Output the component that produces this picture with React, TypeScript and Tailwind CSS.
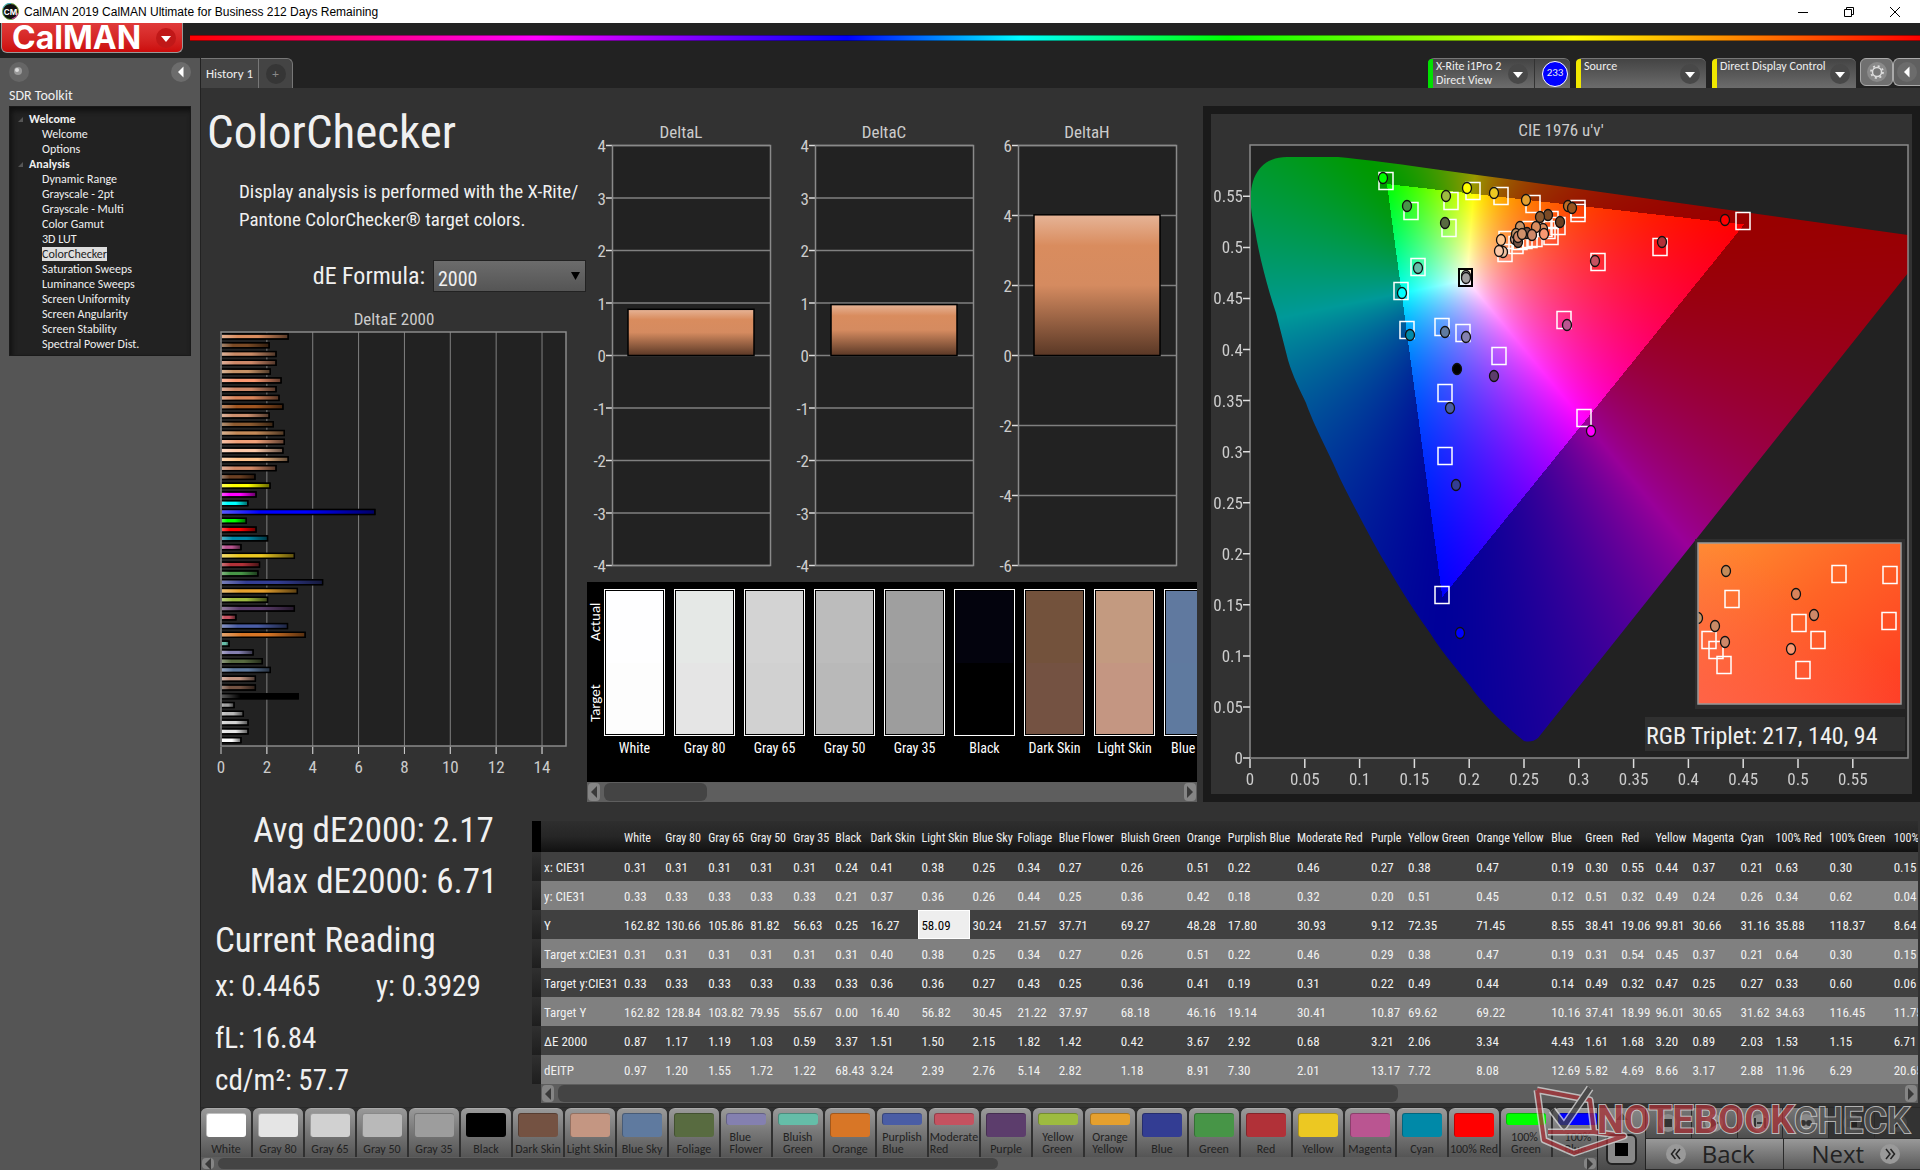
import { useEffect, useRef } from 'react';
import type { ReactNode } from 'react';

const tree = [
  { group: 'Welcome', items: ['Welcome', 'Options'] },
  {
    group: 'Analysis',
    items: ['Dynamic Range', 'Grayscale - 2pt', 'Grayscale - Multi', 'Color Gamut', '3D LUT', 'ColorChecker', 'Saturation Sweeps', 'Luminance Sweeps', 'Screen Uniformity', 'Screen Angularity', 'Screen Stability', 'Spectral Power Dist.']
  }
];

// top to bottom: [dE2000, colour]
const deltaE: [number, string][] = [
  [2.93, '#d98c5e'], [2.1, '#7a4a25'], [2.4, '#c98a66'], [2.4, '#cd8868'], [2.15, '#c69266'], [2.62, '#fa9872'],
  [2.4, '#cd8868'], [2.53, '#d9845a'], [2.7, '#a05520'], [2.1, '#cd906e'], [2.28, '#8c5a30'], [2.76, '#c48a58'],
  [2.76, '#f0a078'], [2.7, '#fcc8a8'], [2.93, '#ffc48e'], [2.4, '#d08866'], [1.48, '#6b3f22'], [2.14, '#ffff00'],
  [1.53, '#ff00ff'], [1.17, '#00ffff'], [6.71, '#0000ff'], [1.1, '#00ff00'], [1.53, '#ff0000'], [2.03, '#0089a8'],
  [0.87, '#ba5591'], [3.2, '#ecc822'], [1.68, '#b13138'], [1.61, '#479547'], [4.43, '#333d93'], [3.33, '#e5a02e'],
  [2.03, '#9dbb40'], [3.2, '#5c3d6c'], [0.65, '#c55260'], [2.9, '#4a5da5'], [3.67, '#d87626'], [0.35, '#65bda8'],
  [1.4, '#8480b0'], [1.8, '#586b40'], [2.15, '#5f7a9f'], [1.5, '#c49682'], [1.5, '#745242'], [3.37, '#000000'],
  [0.57, '#9f9f9f'], [0.97, '#b9b9b9'], [1.18, '#d1d1d1'], [1.18, '#e5e5e5'], [0.87, '#ffffff']
];

const deltas = [
  { title: 'DeltaL', max: 4, step: 1, value: 0.88 },
  { title: 'DeltaC', max: 4, step: 1, value: 0.97 },
  { title: 'DeltaH', max: 6, step: 2, value: 4.02 }
];

const comparator = [
  { name: 'White', actual: '#fefeff', target: '#fdfdfd' },
  { name: 'Gray 80', actual: '#e5e8e6', target: '#e5e5e5' },
  { name: 'Gray 65', actual: '#d3d3d3', target: '#d1d1d1' },
  { name: 'Gray 50', actual: '#bcbcbc', target: '#b9b9b9' },
  { name: 'Gray 35', actual: '#9f9f9f', target: '#9d9d9d' },
  { name: 'Black', actual: '#03030d', target: '#000000' },
  { name: 'Dark Skin', actual: '#73523c', target: '#745242' },
  { name: 'Light Skin', actual: '#c39a80', target: '#c49682' },
  { name: 'Blue Sky', actual: '#60799f', target: '#5f7a9f' }
];

// name, column width, then one value per table row
const columns: [string, number, ...string[]][] = [
  ['White', 41, '0.31', '0.33', '162.82', '0.31', '0.33', '162.82', '0.87', '0.97'],
  ['Gray 80', 43, '0.31', '0.33', '130.66', '0.31', '0.33', '128.84', '1.17', '1.20'],
  ['Gray 65', 42, '0.31', '0.33', '105.86', '0.31', '0.33', '103.82', '1.19', '1.55'],
  ['Gray 50', 43, '0.31', '0.33', '81.82', '0.31', '0.33', '79.95', '1.03', '1.72'],
  ['Gray 35', 42, '0.31', '0.33', '56.63', '0.31', '0.33', '55.67', '0.59', '1.22'],
  ['Black', 35, '0.24', '0.21', '0.25', '0.31', '0.33', '0.00', '3.37', '68.43'],
  ['Dark Skin', 51, '0.41', '0.37', '16.27', '0.40', '0.36', '16.40', '1.51', '3.24'],
  ['Light Skin', 51, '0.38', '0.36', '58.09', '0.38', '0.36', '56.82', '1.50', '2.39'],
  ['Blue Sky', 45, '0.25', '0.26', '30.24', '0.25', '0.27', '30.45', '2.15', '2.76'],
  ['Foliage', 41, '0.34', '0.44', '21.57', '0.34', '0.43', '21.22', '1.82', '5.14'],
  ['Blue Flower', 62, '0.27', '0.25', '37.71', '0.27', '0.25', '37.97', '1.42', '2.82'],
  ['Bluish Green', 66, '0.26', '0.36', '69.27', '0.26', '0.36', '68.18', '0.42', '1.18'],
  ['Orange', 41, '0.51', '0.42', '48.28', '0.51', '0.41', '46.16', '3.67', '8.91'],
  ['Purplish Blue', 69, '0.22', '0.18', '17.80', '0.22', '0.19', '19.14', '2.92', '7.30'],
  ['Moderate Red', 74, '0.46', '0.32', '30.93', '0.46', '0.31', '30.41', '0.68', '2.01'],
  ['Purple', 37, '0.27', '0.20', '9.12', '0.29', '0.22', '10.87', '3.21', '13.17'],
  ['Yellow Green', 68, '0.38', '0.51', '72.35', '0.38', '0.49', '69.62', '2.06', '7.72'],
  ['Orange Yellow', 75, '0.47', '0.45', '71.45', '0.47', '0.44', '69.22', '3.34', '8.08'],
  ['Blue', 34, '0.19', '0.12', '8.55', '0.19', '0.14', '10.16', '4.43', '12.69'],
  ['Green', 36, '0.30', '0.51', '38.41', '0.31', '0.49', '37.41', '1.61', '5.82'],
  ['Red', 34, '0.55', '0.32', '19.06', '0.54', '0.32', '18.99', '1.68', '4.69'],
  ['Yellow', 37, '0.44', '0.49', '99.81', '0.45', '0.47', '96.01', '3.20', '8.66'],
  ['Magenta', 48, '0.37', '0.24', '30.66', '0.37', '0.25', '30.65', '0.89', '3.17'],
  ['Cyan', 35, '0.21', '0.26', '31.16', '0.21', '0.27', '31.62', '2.03', '2.88'],
  ['100% Red', 54, '0.63', '0.34', '35.88', '0.64', '0.33', '34.63', '1.53', '11.96'],
  ['100% Green', 64, '0.30', '0.62', '118.37', '0.30', '0.60', '116.45', '1.15', '6.29'],
  ['100% Blue', 60, '0.15', '0.04', '8.64', '0.15', '0.06', '11.75', '6.71', '20.65']
];
const rowNames = ['x: CIE31', 'y: CIE31', 'Y', 'Target x:CIE31', 'Target y:CIE31', 'Target Y', 'ΔE 2000', 'dEITP'];

const patches: [string, string][] = [
  ['White', '#ffffff'], ['Gray 80', '#e5e5e5'], ['Gray 65', '#d1d1d1'], ['Gray 50', '#b9b9b9'], ['Gray 35', '#9d9d9d'],
  ['Black', '#000000'], ['Dark Skin', '#745242'], ['Light Skin', '#c49682'], ['Blue Sky', '#5f7a9f'], ['Foliage', '#586b40'],
  ['Blue\nFlower', '#8480b0'], ['Bluish\nGreen', '#65bda8'], ['Orange', '#d87626'], ['Purplish\nBlue', '#4a5da5'], ['Moderate\nRed', '#c55260'],
  ['Purple', '#5c3d6c'], ['Yellow\nGreen', '#9dbb40'], ['Orange\nYellow', '#e5a02e'], ['Blue', '#333d93'], ['Green', '#479547'],
  ['Red', '#b13138'], ['Yellow', '#ecc822'], ['Magenta', '#ba5591'], ['Cyan', '#0089a8'], ['100% Red', '#ff0000'],
  ['100%\nGreen', '#00ff00'], ['100%\nBlue', '#0000ff']
];

const targets = [
  [1386, 181], [1473, 191], [1501, 196], [1451, 201], [1533, 204], [1411, 211], [1449, 228], [1578, 209], [1578, 213],
  [1743, 221], [1660, 247], [1598, 262], [1418, 267], [1401, 291], [1407, 330], [1442, 327], [1463, 333], [1564, 320],
  [1499, 356], [1445, 393], [1445, 456], [1584, 418], [1442, 595],
  [1505, 253], [1506, 240], [1516, 245], [1525, 240], [1520, 241], [1535, 238], [1530, 230], [1551, 236], [1558, 226],
  [1551, 220], [1548, 230], [1530, 239], [1545, 228]
];

const measured: [number, number, string][] = [
  [1383, 178, '#00ff00'], [1467, 188, '#ffff00'], [1494, 193, '#ecc822'], [1446, 196, '#9dbb40'], [1526, 200, '#e5a02e'],
  [1407, 206, '#479547'], [1568, 206, '#c06c24'], [1572, 208, '#9a5520'], [1445, 223, '#586b40'], [1725, 220, '#ff0000'],
  [1662, 242, '#b13138'], [1595, 261, '#c55260'], [1418, 268, '#65bda8'], [1402, 293, '#00ffff'], [1410, 335, '#0089a8'],
  [1445, 332, '#5f7a9f'], [1466, 337, '#8480b0'], [1567, 325, '#ba5591'], [1457, 369, '#000000'], [1494, 376, '#5c3d6c'],
  [1450, 408, '#4a5da5'], [1456, 485, '#333d93'], [1591, 431, '#ff00ff'], [1460, 633, '#0000ff'],
  [1548, 215, '#7a4a25'], [1540, 217, '#8c5a30'], [1560, 222, '#6b3f22'], [1543, 229, '#d98c5e'], [1544, 234, '#fa9872'],
  [1536, 227, '#d98c5e'], [1520, 227, '#c69266'], [1527, 233, '#745242'], [1532, 235, '#cd8868'], [1515, 239, '#c49682'],
  [1518, 242, '#745242'], [1516, 234, '#c69266'], [1518, 237, '#cd8868'], [1522, 234, '#d0906a'], [1501, 240, '#ffc48e'],
  [1503, 252, '#f0c0a0'], [1499, 251, '#fcc8a8']
];

const insetTargets = [[1839, 574], [1890, 575], [1732, 599], [1799, 623], [1889, 621], [1709, 640], [1716, 650], [1724, 665], [1818, 640], [1803, 670]];
const insetMeasured: [number, number, string][] = [
  [1726, 571, '#c48a58'], [1796, 594, '#d9845a'], [1814, 615, '#cd8868'], [1715, 626, '#c98a66'], [1725, 642, '#cd8868'], [1791, 649, '#fa9872'], [1698, 618, '#c69266']
];

const locus =
  'M1287 157 H1338 C1380 161 1440 170 1500 178 L1908 235 V273 L1538 738 Q1532 743 1524 741 C1500 722 1480 700 1471 687 C1456 668 1441 651 1430 633 C1418 616 1407 600 1397 583 C1386 565 1375 546 1365 527 C1353 504 1342 484 1333 463 C1323 442 1313 423 1306 403 C1300 390 1293 377 1288 360 L1276 313 C1267 286 1259 255 1255 230 C1251 213 1250 202 1251 192 C1253 172 1264 157 1287 157 Z';

function Scrollbar({ thumb, size = 'h-5' }: { thumb: string; size?: string }) {
  return (
    <div className={`flex items-stretch gap-1 bg-[#5e5e5e] p-px ${size}`}>
      <button aria-label="Scroll left" className="flex w-3 shrink-0 items-center justify-center rounded bg-[#858585]">
        <svg width="6" height="12" viewBox="0 0 6 12"><path d="M6 0v12L0 6z" fill="#3a3a3a" /></svg>
      </button>
      <div className="min-w-0 flex-1"><div className={`h-full rounded-md bg-[#444] ${thumb}`} /></div>
      <button aria-label="Scroll right" className="flex w-3 shrink-0 items-center justify-center rounded bg-[#858585]">
        <svg width="6" height="12" viewBox="0 0 6 12"><path d="M0 0v12l6-6z" fill="#3a3a3a" /></svg>
      </button>
    </div>
  );
}

function RoundArrow({ left }: { left?: boolean }) {
  return (
    <svg width="20" height="20" viewBox="0 0 20 20" className="shrink-0">
      <circle cx="10" cy="10" r="10" fill={left ? '#6c6c6c' : '#484848'} />
      <path d={left ? 'M12.500 4.500v11L7 10z' : 'M5 8h10l-5 6z'} fill="#fff" />
    </svg>
  );
}

function TitleBar() {
  return (
    <div className="flex h-[23px] items-center justify-between bg-white text-black">
      <div className="flex items-center gap-[5px] pl-0.5">
        <svg width="17" height="17" viewBox="0 0 17 17">
          <circle cx="8.500" cy="8.500" r="8" fill="#111" stroke="#7a4" />
          <path d="M1 5A8 8 0 0 1 9 .5" stroke="#3ac" fill="none" />
          <path d="M16 10a8 8 0 0 1-6 6" stroke="#c3a" fill="none" />
          <text x="8.500" y="11.500" fontSize="8" fontWeight="700" fill="#fff" textAnchor="middle" fontFamily="Inter">CM</text>
        </svg>
        <span className="font-['Liberation_Sans',sans-serif] text-xs">CalMAN 2019 CalMAN Ultimate for Business 212 Days Remaining</span>
      </div>
      <div className="flex items-center gap-9 pr-5">
        <button aria-label="Minimize"><svg width="10" height="10" viewBox="0 0 10 10"><path d="M0 5.500h10" stroke="#000" /></svg></button>
        <button aria-label="Restore"><svg width="10" height="10" viewBox="0 0 10 10"><path d="M.5 2.500h7v7h-7zM2.500 2.500v-2h7v7h-2" stroke="#000" fill="none" /></svg></button>
        <button aria-label="Close"><svg width="10" height="10" viewBox="0 0 10 10"><path d="M0 0l10 10M10 0L0 10" stroke="#000" /></svg></button>
      </div>
    </div>
  );
}

function Sidebar() {
  return (
    <aside className="w-[201px] shrink-0 border-r border-[#222] bg-[#555] px-[9px] font-[Carlito,Lato,sans-serif] text-[#f0f0f0]">
      <div className="flex h-7 items-center justify-between">
        <svg width="20" height="20" viewBox="0 0 20 20">
          <circle cx="10" cy="10" r="10" fill="#666" />
          <circle cx="9" cy="9" r="4" fill="#999" />
          <circle cx="8" cy="8" r="2" fill="#ddd" />
        </svg>
        <button aria-label="Collapse sidebar"><RoundArrow left /></button>
      </div>
      <h2 className="h-5 text-sm leading-5">SDR Toolkit</h2>
      <nav className="h-[250px] border border-[#1a1a1a] bg-[#222] pt-[5px] text-xs leading-[15px] shadow-[inset_2px_4px_5px_#111]">
        {tree.map((g) => (
          <div key={g.group}>
            <div className="flex h-[15px] items-center gap-[6px] pl-2 font-bold">
              <svg width="5" height="5" viewBox="0 0 5 5"><path d="M5 0v5H0z" fill="#555" /></svg>
              {g.group}
            </div>
            {g.items.map((item) => (
              <a key={item} href="#" className="block h-[15px] pl-8">
                <span className={item === 'ColorChecker' ? 'bg-[#ddd] text-[#222]' : ''}>{item}</span>
              </a>
            ))}
          </div>
        ))}
      </nav>
    </aside>
  );
}

function DeviceTab({ lines, accent, className, children }: { lines: string[]; accent: string; className: string; children?: ReactNode }) {
  return (
    <div className={`flex h-[30px] rounded-t-md border-t border-[#777] bg-linear-to-b from-[#444] to-[#6c6c6c] ${className}`}>
      <span className={`w-[5px] rounded-tl ${accent}`} />
      <button className="flex flex-1 items-center justify-between pr-[6px] pl-[3px] text-left text-xs leading-[14px]">
        <span className="h-[29px]">{lines.map((l) => <span key={l} className="block">{l}</span>)}</span>
        <RoundArrow />
      </button>
      {children}
    </div>
  );
}

function TabBar() {
  return (
    <div className="flex h-[30px] justify-between bg-[#222] font-[Carlito,Lato,sans-serif] text-[#eee]">
      <div className="flex rounded-tr-md border-t border-r border-[#777] bg-[#444]">
        <button className="w-[58px] border-r border-[#777] text-[13px]">History 1</button>
        <button aria-label="Add tab" className="flex w-[33px] items-center justify-center">
          <span className="flex size-5 items-center justify-center rounded-full bg-[#363636] text-[13px] text-[#888]">+</span>
        </button>
      </div>
      <div className="flex gap-[6px]">
        <DeviceTab lines={['X-Rite i1Pro 2', 'Direct View']} accent="bg-[#00e000]" className="w-[142px]">
          <span className="flex w-9 items-center justify-end border-l border-[#333] pr-[2px]">
            <span className="flex size-[26px] items-center justify-center rounded-full border border-white bg-[#0000ff] text-[11px]">233</span>
          </span>
        </DeviceTab>
        <DeviceTab lines={['Source']} accent="bg-[#f0e800]" className="w-[130px]" />
        <DeviceTab lines={['Direct Display Control']} accent="bg-[#f0e800]" className="w-[144px]" />
        <div className="-ml-[2px] flex h-7">
          <button aria-label="Settings" className="flex w-[33px] items-center justify-center rounded-md border border-[#aaa] bg-[#707070]">
            <svg width="20" height="20" viewBox="0 0 20 20">
              <circle cx="10" cy="10" r="10" fill="#8a8a8a" />
              <circle cx="10" cy="10" r="6" fill="none" stroke="#ddd" strokeWidth="1.800" strokeDasharray="2 2.712" />
              <circle cx="10" cy="10" r="4.500" fill="#777" stroke="#ddd" strokeWidth="1.500" />
            </svg>
          </button>
          <button aria-label="Collapse toolbar" className="w-[27px] rounded-l-md border border-r-0 border-[#aaa] bg-[#606060] pl-[3px]"><RoundArrow left /></button>
        </div>
      </div>
    </div>
  );
}

function DeltaEChart() {
  const x = (v: number) => 20 + v * 22.93;
  return (
    <svg viewBox="0 0 386 482" className="mt-4 w-full" fontSize="17" fill="#ccc" textAnchor="middle">
      <defs>
        <linearGradient id="sheenX">
          <stop offset="0" stopColor="#fff" stopOpacity=".35" />
          <stop offset=".25" stopColor="#fff" stopOpacity="0" />
          <stop offset=".55" stopColor="#000" stopOpacity="0" />
          <stop offset="1" stopColor="#000" stopOpacity=".6" />
        </linearGradient>
      </defs>
      <text x="193" y="17">DeltaE 2000</text>
      <rect x="20" y="24" width="345" height="414" fill="#222" />
      {[2, 4, 6, 8, 10, 12, 14].map((v) => <path key={v} d={`M${x(v)} 24V446`} stroke="#808080" />)}
      {[0, 2, 4, 6, 8, 10, 12, 14].map((v) => (
        <g key={v}>
          <path d={`M${x(v)} 439v7`} stroke="#ccc" />
          <text x={x(v)} y="465">{v}</text>
        </g>
      ))}
      {deltaE.map(([v, c], i) => (
        <g key={i} transform={`translate(20 ${26 + i * 8.775})`} stroke="#000" strokeWidth="1.300">
          <rect width={v * 22.93} height="5" fill={c} />
          <rect width={v * 22.93} height="5" fill="url(#sheenX)" />
        </g>
      ))}
      <rect x="20" y="24" width="345" height="414" fill="none" stroke="#8a8a8a" strokeWidth="1.500" />
    </svg>
  );
}

function DeltaChart({ title, max, step, value }: { title: string; max: number; step: number; value: number }) {
  const y = (v: number) => 235.5 - (v * 210) / max;
  const ticks: number[] = [];
  for (let v = max; v >= -max; v -= step) ticks.push(v);
  return (
    <svg viewBox="0 0 203 462" className="min-w-0 flex-1" fontSize="17" fill="#ccc">
      <defs>
        <linearGradient id="copper" x2="0" y2="1">
          <stop offset="0" stopColor="#e6b497" />
          <stop offset=".22" stopColor="#d98c5e" />
          <stop offset=".5" stopColor="#d58b60" />
          <stop offset="1" stopColor="#5a3826" />
        </linearGradient>
      </defs>
      <text x="94" y="18" textAnchor="middle">{title}</text>
      <rect x="25.500" y="25.500" width="158" height="420" fill="#222" />
      {ticks.map((v) => (
        <g key={v}>
          <path d={`M25 ${y(v)}h158`} stroke="#808080" strokeWidth="1.500" />
          <path d={`M19 ${y(v)}h6`} stroke="#ddd" strokeWidth="1.500" />
          <text x="19" y={y(v) + 6.5} textAnchor="end">{v}</text>
        </g>
      ))}
      <rect x="25.500" y="25.500" width="158" height="420" fill="none" stroke="#8a8a8a" strokeWidth="1.500" />
      <rect x="41" y={y(value)} width="126" height={235.5 - y(value)} fill="url(#copper)" stroke="#000" strokeWidth="1.500" />
    </svg>
  );
}

function Comparator() {
  return (
    <div className="mr-[6px]">
      <div className="flex h-[200px] overflow-hidden bg-black pt-[7px] text-white">
        <div className="flex h-[147px] w-[17px] shrink-0 flex-col justify-between font-[Carlito,Lato,sans-serif] text-[15px] leading-[17px]">
          <span className="h-[66px] rotate-180 text-center [writing-mode:vertical-rl]">Actual</span>
          <span className="h-[66px] rotate-180 text-center [writing-mode:vertical-rl]">Target</span>
        </div>
        <div className="flex gap-[9px]">
          {comparator.map((c) => (
            <div key={c.name} className="w-[61px] shrink-0">
              <div className="h-[147px] border border-white p-px">
                <div className="h-[72px]" style={{ background: c.actual }} />
                <div className="h-[71px]" style={{ background: c.target }} />
              </div>
              <div className="text-center text-sm leading-6 whitespace-nowrap">{c.name}</div>
            </div>
          ))}
        </div>
      </div>
      <Scrollbar thumb="w-[103px]" />
    </div>
  );
}

// Fills the u'v' plane with the brightest colour of each chromaticity. Outside the Rec.709
// triangle the colour is pulled towards white until it fits, then dimmed.
function GamutFill() {
  const ref = useRef<HTMLCanvasElement>(null);
  useEffect(() => {
    const canvas = ref.current;
    const ctx = canvas?.getContext('2d');
    if (!canvas || !ctx) return;
    const img = ctx.createImageData(canvas.width, canvas.height);
    for (let py = 0; py < canvas.height; py++) {
      for (let px = 0; px < canvas.width; px++) {
        const u = (px + 0.5) / 1096;
        const v = (613 - py) / 1021.3;
        const X = (9 * u) / (4 * v);
        const Z = (12 - 3 * u - 20 * v) / (4 * v);
        const rgb = [3.2406 * X - 1.5372 - 0.4986 * Z, -0.9689 * X + 1.8758 + 0.0415 * Z, 0.0557 * X - 0.204 + 1.057 * Z];
        const low = Math.min(0, ...rgb);
        const outside = low < 0;
        const top = Math.max(...rgb) - low;
        const o = (py * canvas.width + px) * 4;
        rgb.forEach((c, i) => {
          const level = (c - low) / top;
          img.data[o + i] = outside ? 153 * level ** 1.5 : 255 * level;
        });
        img.data[o + 3] = 255;
      }
    }
    ctx.putImageData(img, 0, 0);
  }, []);
  return <canvas ref={ref} width={659} height={613} className="block" />;
}

function Marker({ x, y, fill }: { x: number; y: number; fill: string }) {
  return <ellipse cx={x} cy={y} rx="4.500" ry="5.500" fill={fill} stroke="#111" strokeWidth="1.300" />;
}

function CieChart() {
  const ticks = Array.from({ length: 12 }, (_, i) => i);
  const label = (i: number) => String(+(i * 0.05).toFixed(2));
  return (
    <section className="mt-[18px] min-w-0 flex-1 self-start border-8 border-[#1a1a1a]">
      <svg viewBox="1211 114 701 680" className="w-full" fontSize="17" fill="#ccc">
        <defs>
          <clipPath id="locus"><path d={locus} /></clipPath>
          <clipPath id="inset"><rect x="1698" y="543" width="203" height="161" /></clipPath>
          <linearGradient id="insetFill" x2="1" y2="1">
            <stop offset="0" stopColor="#ff9030" />
            <stop offset=".45" stopColor="#ff6426" />
            <stop offset="1" stopColor="#ff3a22" />
          </linearGradient>
          <linearGradient id="insetPink" x1="0" y1="1" x2=".6" y2=".4">
            <stop offset="0" stopColor="#ff6450" stopOpacity=".8" />
            <stop offset="1" stopColor="#ff6450" stopOpacity="0" />
          </linearGradient>
        </defs>
        <text x="1561" y="136" textAnchor="middle">CIE 1976 u'v'</text>
        <rect x="1250" y="145" width="658" height="613" fill="#222" />
        <g clipPath="url(#locus)">
          <foreignObject x="1250" y="145" width="659" height="613"><GamutFill /></foreignObject>
        </g>
        <rect x="1250" y="145" width="658" height="613" fill="none" stroke="#8a8a8a" strokeWidth="1.500" />
        {ticks.map((i) => (
          <g key={i}>
            <path d={`M${1250 + i * 54.8} 759v9M1243 ${758 - i * 51.06}h7`} stroke="#ddd" strokeWidth="1.500" />
            <text x={1250 + i * 54.8} y="785" textAnchor="middle">{label(i)}</text>
            <text x="1243" y={764 - i * 51.06} textAnchor="end">{label(i)}</text>
          </g>
        ))}
        <g fill="none" stroke="#fff" strokeWidth="1.500">
          {targets.map(([x, y], i) => <rect key={i} x={x - 7} y={y - 8.5} width="14" height="17" />)}
        </g>
        <rect x="1459" y="269" width="13" height="17" fill="none" stroke="#000" strokeWidth="2" />
        <Marker x={1466} y={276} fill="#c0c0c0" />
        <Marker x={1466} y={278} fill="#9f9f9f" />
        {measured.map(([x, y, c], i) => <Marker key={i} x={x} y={y} fill={c} />)}
        <rect x="1695" y="539" width="210" height="170" fill="#2e2e2e" />
        <rect x="1698" y="543" width="203" height="161" fill="url(#insetFill)" />
        <rect x="1698" y="543" width="203" height="161" fill="url(#insetPink)" />
        <g clipPath="url(#inset)">
          <g fill="none" stroke="#fff" strokeWidth="1.500">
            {insetTargets.map(([x, y], i) => <rect key={i} x={x - 7} y={y - 8.5} width="14" height="17" />)}
          </g>
          {insetMeasured.map(([x, y, c], i) => <Marker key={i} x={x} y={y} fill={c} />)}
        </g>
        <rect x="1698" y="543" width="203" height="161" fill="none" stroke="#999" strokeWidth="1.500" />
        <rect x="1645" y="717" width="260" height="34" fill="#303030" />
        <text x="1646" y="744" fontSize="24" fill="#f0f0f0">RGB Triplet: 217, 140, 94</text>
      </svg>
    </section>
  );
}

function Readings() {
  return (
    <div className="w-[331px] shrink-0 pt-[3px] pl-[14px] text-[29px] leading-10 text-[#f0f0f0]">
      <div className="text-center text-[35px] leading-[51px]">Avg dE2000: 2.17</div>
      <div className="text-center text-[35px] leading-[51px]">Max dE2000: 6.71</div>
      <div className="mt-2 text-[35px] leading-[51px]">Current Reading</div>
      <div className="flex"><span className="w-[161px]">x: 0.4465</span><span>y: 0.3929</span></div>
      <div className="mt-3">fL: 16.84</div>
      <div className="mt-[2px]">cd/m²: 57.7</div>
    </div>
  );
}

function DataGrid() {
  return (
    <div className="mt-[19px] mr-[2px] min-w-0 flex-1 overflow-hidden">
      <table className="w-[1419px] table-fixed text-left text-[13px] text-[#f0f0f0]">
        <colgroup>
          <col className="w-[9px]" />
          <col className="w-[80px]" />
          {columns.map(([name, width]) => <col key={name} style={{ width }} />)}
        </colgroup>
        <thead>
          <tr className="h-[31px] bg-linear-to-b from-[#2e2e2e] via-[#262626] to-[#111] text-xs">
            <td className="bg-black" />
            <td />
            {columns.map(([name]) => <th key={name} scope="col" className="pt-[2px] pl-[3px] font-normal whitespace-nowrap">{name}</th>)}
          </tr>
        </thead>
        <tbody>
          {rowNames.map((row, r) => (
            <tr key={row} className={r % 2 ? 'h-[29px] bg-[#808080]' : 'h-[29px] bg-[#404040]'}>
              <td className="bg-linear-to-b from-[#303030] to-[#1e1e1e]" />
              <th scope="row" className="pt-[2px] pl-[3px] font-normal whitespace-nowrap">{row}</th>
              {columns.map((c, i) => (
                <td key={c[0]} className={r === 2 && i === 7 ? 'bg-[#eee] pt-[2px] pl-[3px] text-black outline-1 -outline-offset-1 outline-white' : 'pt-[2px] pl-[3px] whitespace-nowrap'}>{c[r + 2]}</td>
              ))}
            </tr>
          ))}
        </tbody>
      </table>
      <div className="ml-[9px]"><Scrollbar thumb="w-[840px]" size="h-[19px]" /></div>
    </div>
  );
}

const media = [
  'M-4 -4h8v8h-8z',
  'M-3 -5l8 5l-8 5z',
  'M-6 -5h2v10h-2zM4 -5h2v10h-2zM-3 -1h6v2h-6z',
  'M-6 0a3 3 0 0 1 6 0a3 3 0 0 0 6 0a3 3 0 0 0 -6 0a3 3 0 0 1 -6 0z',
  'M-5 -4h10v8h-10z',
  'M-3 -5l8 5l-8 5z'
];

function PatchStrip() {
  return (
    <div className="flex h-[63px] overflow-hidden bg-[#2a2a2a] pt-px font-[Carlito,Lato,sans-serif] text-[#222]">
      <div className="flex min-w-0 flex-1 flex-col overflow-hidden">
        <div className="flex h-[49px] gap-[2px] overflow-hidden bg-[#303030]">
          {patches.map(([name, color]) => (
            <button key={name} className="flex w-[50px] shrink-0 flex-col items-center justify-between overflow-hidden rounded-t-md border-t border-[#aaa] bg-linear-to-b from-[#999] to-[#555] pt-1">
              <span className={`w-10 shrink-0 rounded-[3px] border-t border-l border-black/25 ${name.includes('\n') ? 'h-3' : 'h-6'}`} style={{ background: color }} />
              <span className="pb-[2px] text-left text-xs leading-3 whitespace-pre">{name}</span>
            </button>
          ))}
        </div>
        <Scrollbar thumb="w-[780px]" size="h-[13px]" />
      </div>
      <div className="flex w-[49px] shrink-0 flex-col items-center justify-between border-x border-[#222] bg-linear-to-b from-[#888] to-[#4a4a4a] pt-1 pb-[5px]">
        <svg width="12" height="8" viewBox="0 0 12 8"><path d="M0 8l6-7 6 7z" fill="#444" /></svg>
        <button aria-label="Stop" className="flex size-[31px] items-center justify-center rounded-md border-2 border-[#222] bg-[#888]"><span className="size-[13px] bg-black" /></button>
      </div>
      <div className="flex w-[274px] shrink-0 flex-col gap-px">
        <div className="flex h-[30px] gap-px">
          {media.map((d, i) => (
            <button key={i} aria-label={`Transport ${i + 1}`} className={i < 4 ? 'flex flex-1 items-center justify-center bg-linear-to-b from-[#777] to-[#4e4e4e]' : 'flex flex-1 items-center justify-center bg-[#333]'}>
              <svg width="20" height="20" viewBox="-10 -10 20 20"><circle r="9" fill={i < 4 ? '#8a8a8a' : '#444'} /><path d={d} fill={i < 4 ? '#333' : '#222'} /></svg>
            </button>
          ))}
        </div>
        <div className="flex h-[30px] gap-px font-['Open_Sans',sans-serif] text-2xl leading-[30px]">
          <button className="flex flex-1 items-center justify-center gap-4 bg-linear-to-b from-[#999] to-[#5a5a5a] pr-2">
            <svg width="20" height="20" viewBox="0 0 20 20"><circle cx="10" cy="10" r="10" fill="#999" /><path d="M9.500 5l-4 5 4 5M14 5l-4 5 4 5" fill="none" stroke="#222" strokeWidth="1.500" /></svg>
            Back
          </button>
          <button className="flex flex-1 items-center justify-center gap-4 bg-linear-to-b from-[#999] to-[#5a5a5a] pl-2">
            Next
            <svg width="20" height="20" viewBox="0 0 20 20"><circle cx="10" cy="10" r="10" fill="#999" /><path d="M6 5l4 5-4 5M10.500 5l4 5-4 5" fill="none" stroke="#222" strokeWidth="1.500" /></svg>
          </button>
        </div>
      </div>
    </div>
  );
}

function Watermark() {
  return (
    <svg width="384" height="74" viewBox="0 0 384 74" className="pointer-events-none absolute right-1 bottom-3 opacity-75">
      <g fill="none" strokeLinejoin="round">
        <path d="M5 6L12 56L42 69L92 52L62 48L16 48M5 6L58 16L62 48" stroke="#ddd" strokeWidth="7" />
        <path d="M5 6L12 56L42 69L92 52L62 48L16 48M5 6L58 16L62 48" stroke="#a83238" strokeWidth="4" />
        <path d="M20 26L32 42L58 4" stroke="#ddd" strokeWidth="8" />
        <path d="M20 26L32 42L58 4" stroke="#444" strokeWidth="5" />
      </g>
      <g fontFamily="Roboto, sans-serif" fontSize="38" stroke="#ddd" strokeWidth="2" style={{ paintOrder: 'stroke' }}>
        <text x="65" y="49" fontWeight="700" fill="#a83238">NOTEBOOK</text>
        <text x="262" y="49" fontSize="36" fontWeight="500" fill="#555">CHECK</text>
      </g>
    </svg>
  );
}

export default function App() {
  return (
    <div className="relative flex min-h-screen flex-col overflow-hidden bg-[#222] font-['Roboto_Condensed',Roboto,sans-serif]">
      <TitleBar />
      <header className="flex h-[35px] gap-[7px]">
        <button className="ml-px flex h-[30px] w-[182px] items-center justify-between rounded-b-md border border-t-0 border-[#999] bg-linear-to-b from-[#e03a3a] to-[#cc0a0a] pr-[6px] pl-[10px] font-['Inter',sans-serif] text-[32px] leading-[28px] font-bold text-white">
          CalMAN
          <svg width="20" height="20" viewBox="0 0 20 20"><circle cx="10" cy="10" r="10" fill="#c01818" /><path d="M5 8h10l-5 6z" fill="#fff" /></svg>
        </button>
        <div className="mt-3 h-[6px] flex-1 border-y border-black/40 bg-[linear-gradient(90deg,#f00_0%,#f0f_20%,#00f_38%,#0ff_48%,#0f0_60%,#ff0_80%,#f00_100%)]" />
      </header>
      <div className="flex flex-1">
        <Sidebar />
        <div className="flex min-w-0 flex-1 flex-col bg-[#323232]">
          <TabBar />
          <main className="flex-1">
            <div className="flex">
              <section className="w-[386px] shrink-0 text-[#f0f0f0]">
                <h1 className="pt-4 pl-[6px] text-[47px] leading-[56px]">ColorChecker</h1>
                <p className="mt-[18px] pl-[38px] text-[19px] leading-7">Display analysis is performed with the X-Rite/<br />Pantone ColorChecker® target colors.</p>
                <div className="mt-[26px] flex h-8 items-center justify-end gap-2 pr-px">
                  <label htmlFor="formula" className="text-2xl">dE Formula:</label>
                  <div className="relative">
                    <select id="formula" className="h-8 w-[153px] appearance-none border border-[#222] bg-linear-to-b from-[#6c6c6c] to-[#555] pt-1 pl-1 text-xl">
                      <option>2000</option>
                    </select>
                    <svg width="9" height="8" viewBox="0 0 9 8" className="pointer-events-none absolute top-3 right-[6px]"><path d="M0 0h9L4.500 8z" /></svg>
                  </div>
                </div>
                <DeltaEChart />
              </section>
              <section className="w-[616px] shrink-0">
                <div className="flex w-[609px] pt-8">
                  {deltas.map((d) => <DeltaChart key={d.title} {...d} />)}
                </div>
                <Comparator />
              </section>
              <CieChart />
            </div>
            <div className="flex">
              <Readings />
              <DataGrid />
            </div>
          </main>
          <PatchStrip />
        </div>
      </div>
      <Watermark />
    </div>
  );
}
